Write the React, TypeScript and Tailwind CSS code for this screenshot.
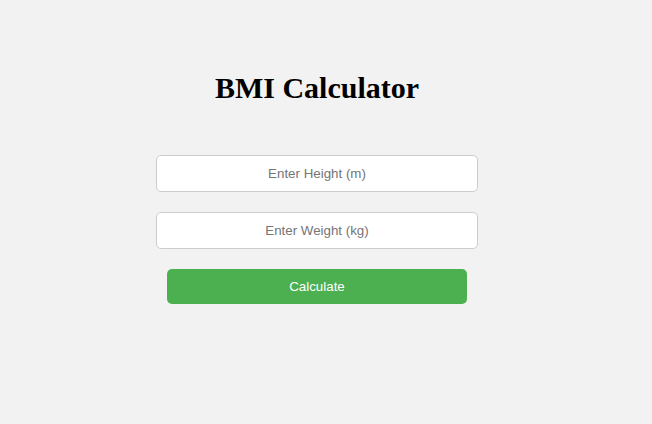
import React, { useState } from "react";

const App = () => {
  const [height, setHeight] = useState<string>("");
  const [weight, setWeight] = useState<string>("");

  return (
    <div className="min-h-screen w-full bg-[#f2f2f2] pt-[71px] font-['Liberation_Sans',Arial,sans-serif]">
      <div className="flex flex-col items-center pr-[18px]">
        <h1 className="m-0 font-['Liberation_Serif','Times_New_Roman',serif] text-[30px] leading-[34px] font-bold text-black">
          BMI Calculator
        </h1>
        <input
          className="mt-[50px] h-[37px] w-[322px] rounded-[5px] border border-[#cccccc] bg-white text-center text-[13.33px] text-black outline-none placeholder:text-[#757575]"
          placeholder="Enter Height (m)"
          value={height}
          onChange={(e) => setHeight(e.target.value)}
        />
        <input
          className="mt-[20px] h-[37px] w-[322px] rounded-[5px] border border-[#cccccc] bg-white text-center text-[13.33px] text-black outline-none placeholder:text-[#757575]"
          placeholder="Enter Weight (kg)"
          value={weight}
          onChange={(e) => setWeight(e.target.value)}
        />
        <button className="mt-[20px] h-[35px] w-[300px] cursor-pointer rounded-[5px] bg-[#4caf50] text-[13.33px] text-white">
          Calculate
        </button>
      </div>
    </div>
  );
};

export default App;
